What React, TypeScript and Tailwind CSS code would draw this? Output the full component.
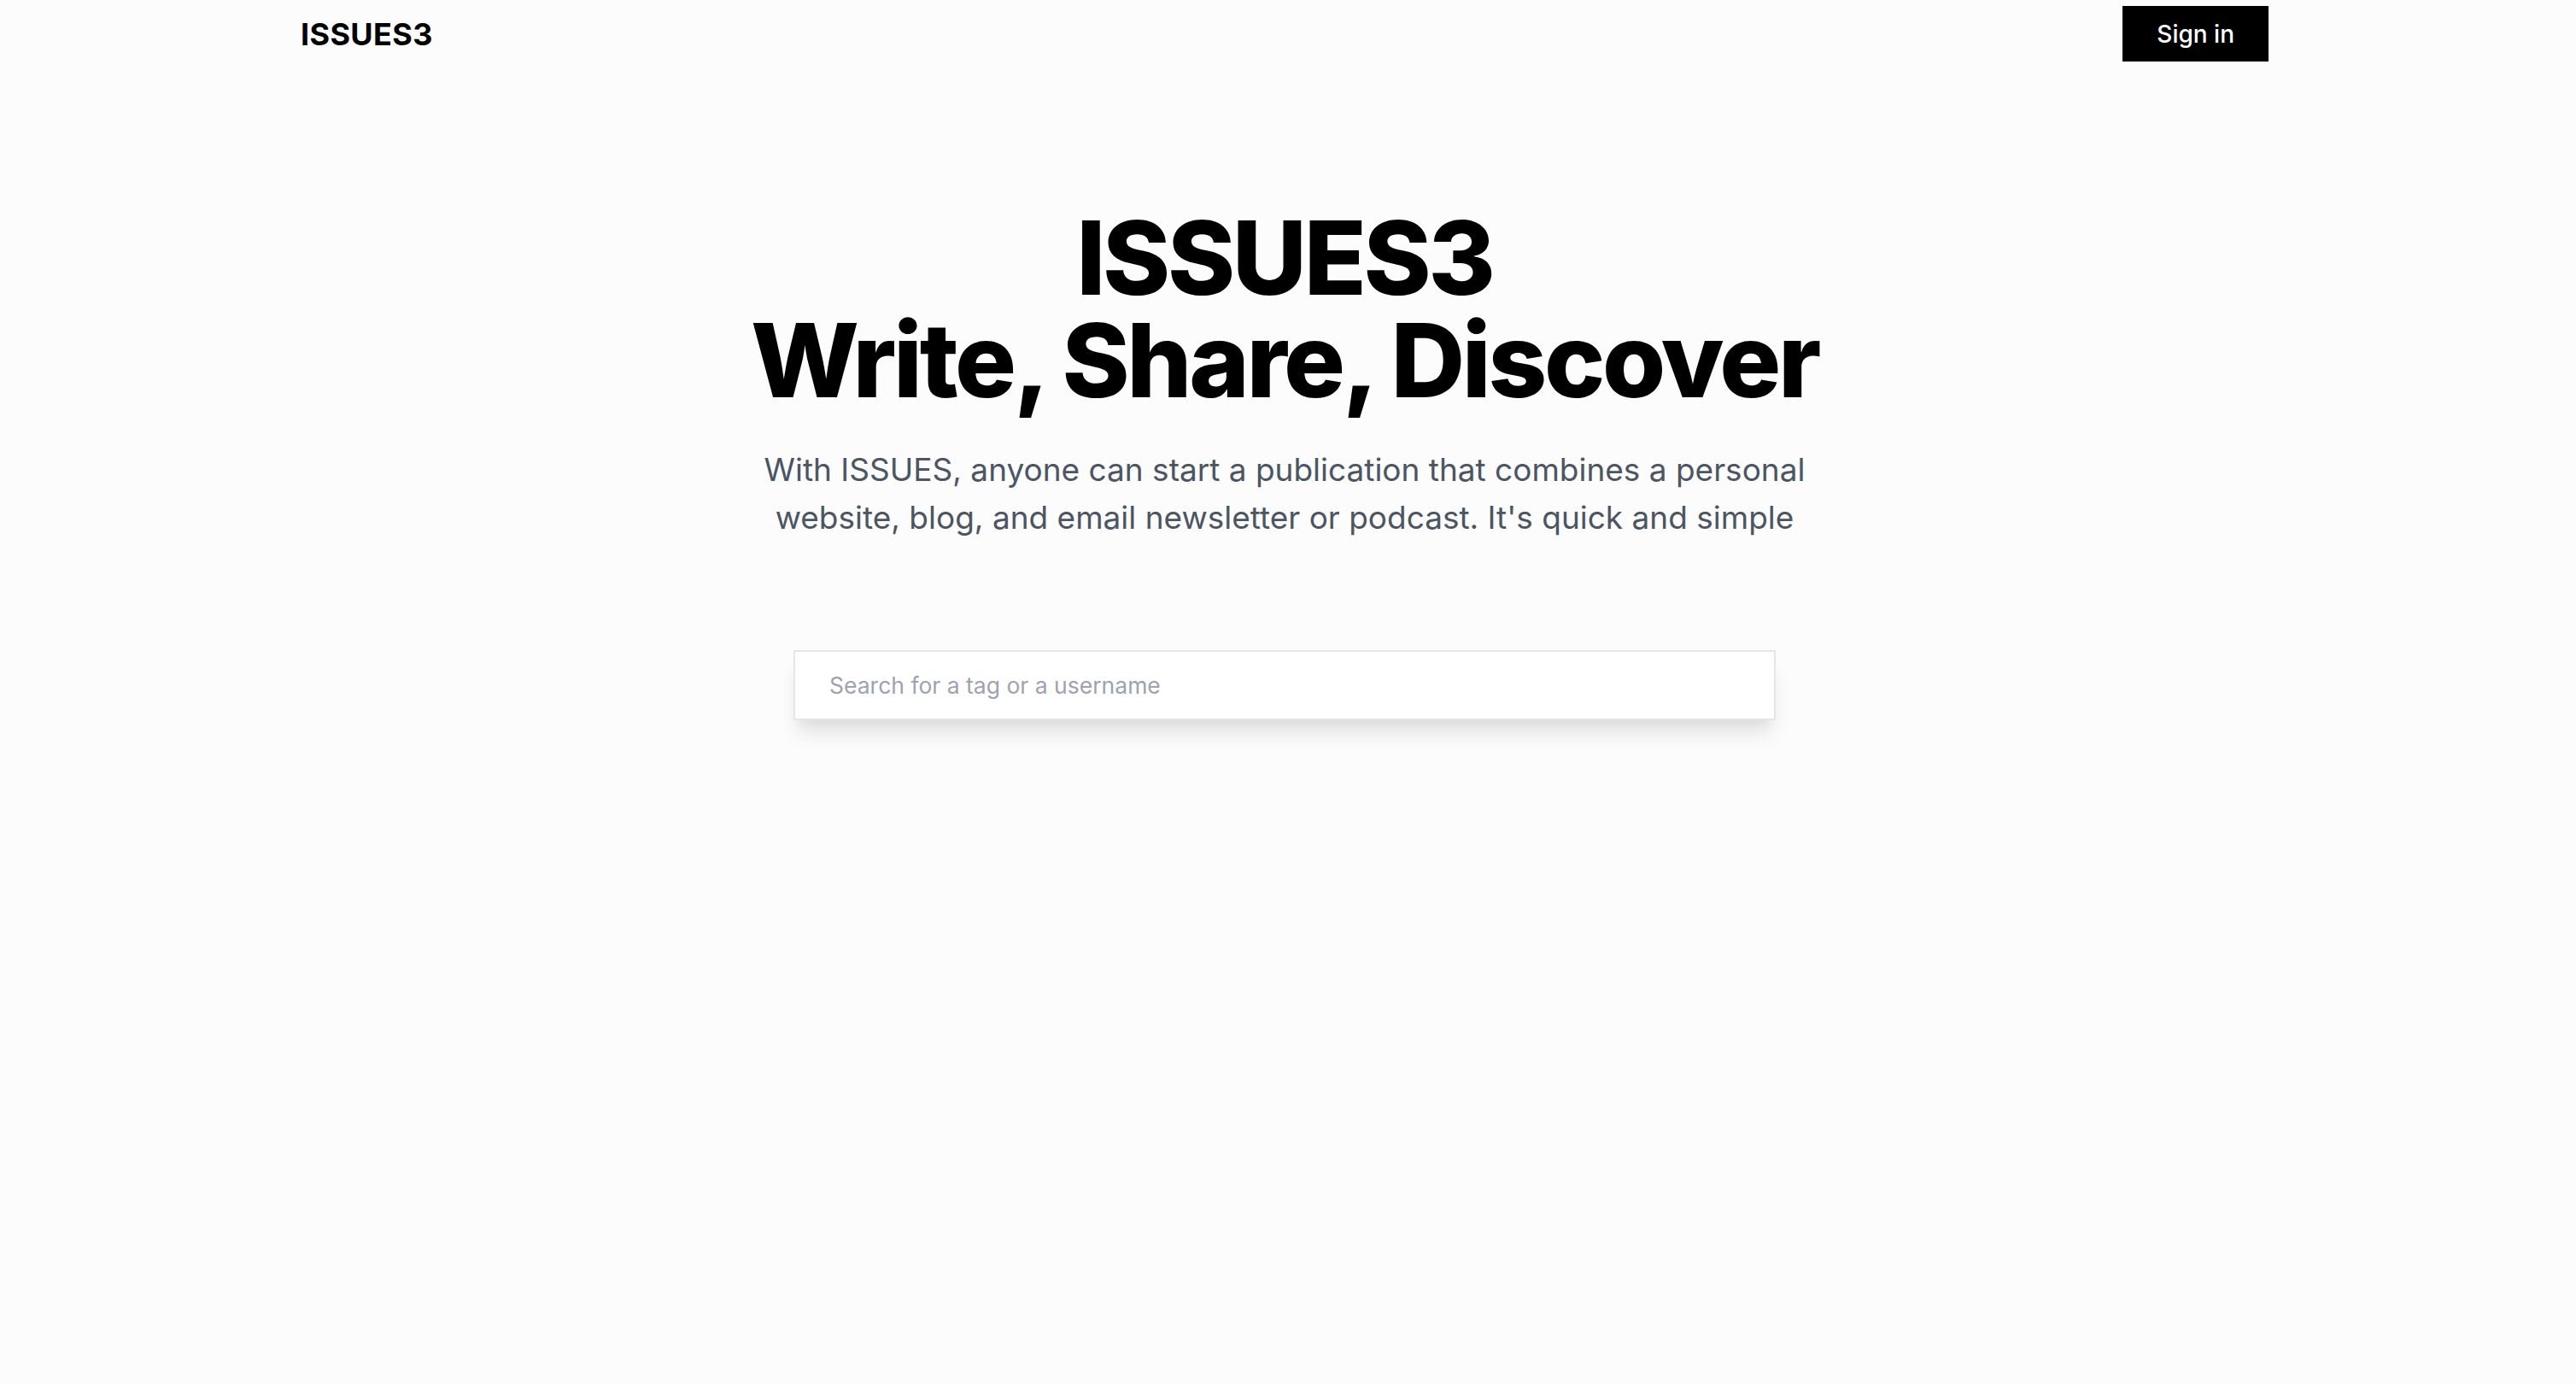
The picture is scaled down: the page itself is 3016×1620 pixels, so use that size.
export default function App() {
  return (
    <div
      className="min-h-screen w-full bg-[#fcfcfc] pr-2 text-black"
      style={{ fontFamily: 'Inter, "Noto Sans", sans-serif' }}
    >
      {/* Header */}
      <header className="mx-auto flex w-[2304px] items-center justify-between pt-[7px]">
        <a className="text-[36px] leading-[40px] font-bold tracking-[0.01em]">ISSUES3</a>
        <button className="h-[65px] bg-black px-10 text-[28px] leading-[40px] font-medium text-white">
          Sign in
        </button>
      </header>

      {/* Hero */}
      <main className="mx-auto flex w-[2304px] flex-col items-center pt-[170px]">
        <h1 className="text-center text-[120px] leading-none font-extrabold tracking-[-0.028em]">
          ISSUES3
          <br />
          Write, Share, Discover
        </h1>
        <p className="mt-10 max-w-[1280px] text-center text-[37px] leading-[56px] text-[#4b5563]">
          With ISSUES, anyone can start a publication that combines a personal website, blog, and
          email newsletter or podcast. It's quick and simple
        </p>

        <div className="mt-[127px] w-[1150px] bg-white shadow-[0_20px_25px_-5px_rgba(0,0,0,0.1),0_10px_10px_-5px_rgba(0,0,0,0.04)]">
          <input
            type="text"
            placeholder="Search for a tag or a username"
            className="h-[82px] w-full border-2 border-[#e5e5eb] bg-white px-10 text-[26.5px] text-[#111827] outline-none placeholder:text-[#9ca3af]"
          />
        </div>
      </main>
    </div>
  );
}
